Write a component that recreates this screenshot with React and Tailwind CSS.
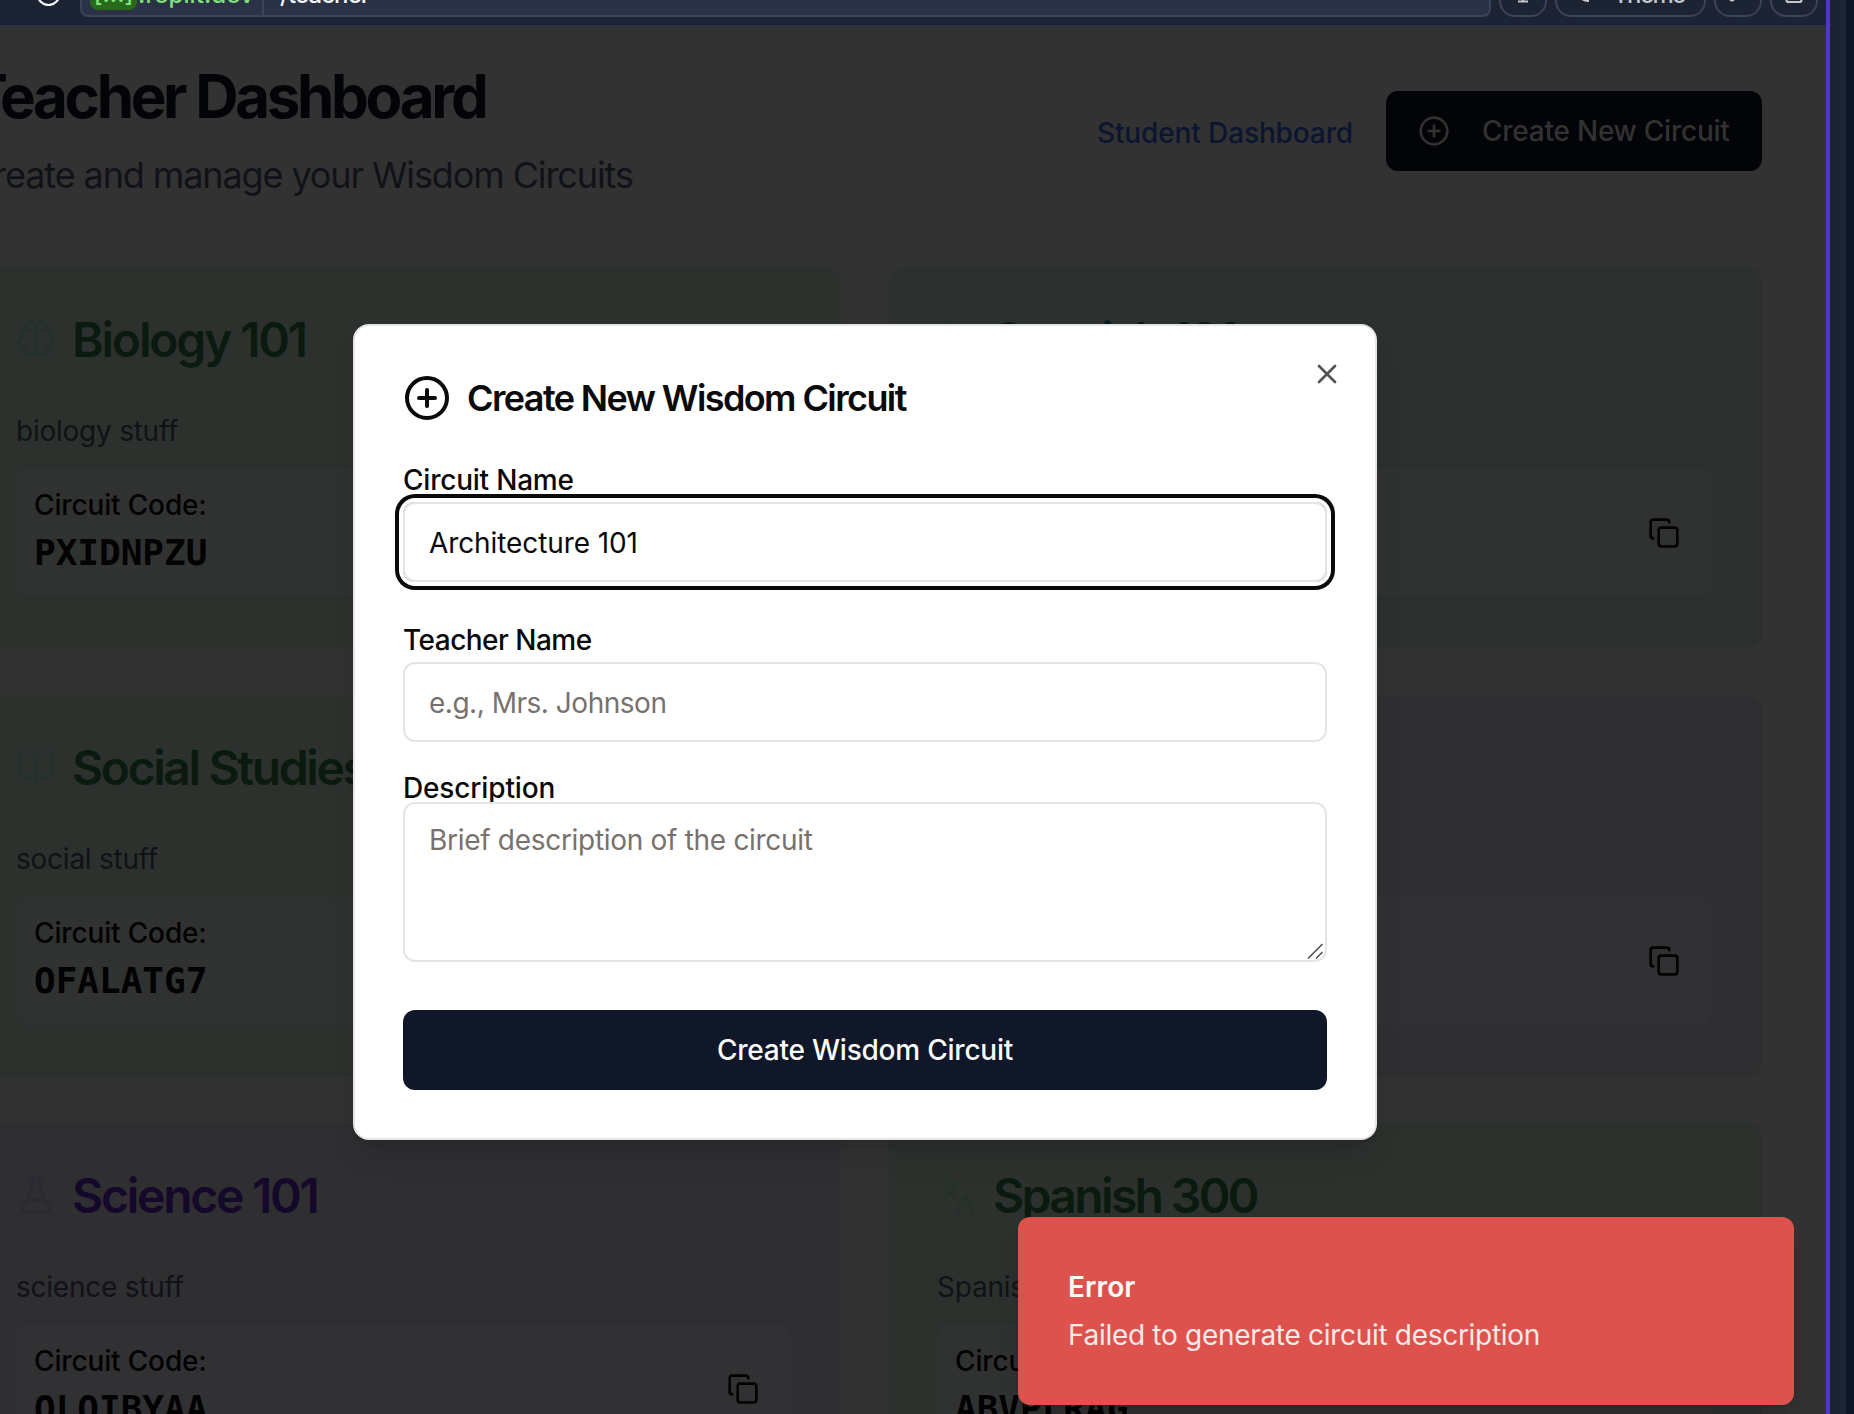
import React from "react";
import { Brain, BookOpen, FlaskConical, Languages, Copy, CirclePlus, X, Calculator } from "lucide-react";

const circuits = [
  { title: "Biology 101", text: "biology stuff", code: "PXIDNPZU", Icon: Brain, card: "bg-[#2d312e]", box: "bg-[#303231]", head: "text-[#0a1a0f] tracking-[-2.18px]", icon: "text-[#25302d]" },
  { title: "Spanish 101", text: "spanish stuff", code: "KWTRMEQA", Icon: Languages, card: "bg-[#2c3130]", box: "bg-[#303232]", head: "text-[#08191a] tracking-[-2.6px]", icon: "text-[#24302e]" },
  { title: "Social Studies", text: "social stuff", code: "OFALATG7", Icon: BookOpen, card: "bg-[#2d312e]", box: "bg-[#303231]", head: "text-[#0a1a0f] tracking-[-2.4px]", icon: "text-[#26312d]" },
  { title: "Math 101", text: "math stuff", code: "HZNQVUCD", Icon: Calculator, card: "bg-[#2f2e31]", box: "bg-[#313133]", head: "text-[#14082b] tracking-[-2.2px]", icon: "text-[#2c2a34]" },
  { title: "Science 101", text: "science stuff", code: "OLOIBYAA", Icon: FlaskConical, card: "bg-[#2f2e31]", box: "bg-[#313133]", head: "text-[#14082b] tracking-[-2.25px]", icon: "text-[#2b2a33]" },
  { title: "Spanish 300", text: "Spanish stuff", code: "ABVPLRAG", Icon: Languages, card: "bg-[#2d312e]", box: "bg-[#303231]", head: "text-[#0a1a0f] tracking-[-2.65px]", icon: "text-[#26302a]" },
];

function CircuitCard({ title, text, code, Icon, card, box, head, icon }) {
  return (
    <article className={`h-[382px] rounded-2xl pt-12 pr-[50px] pl-12 ${card}`}>
      <div className="flex h-12 items-center gap-4">
        <Icon className={`size-10 ${icon}`} />
        <h2 className={`pt-[2px] text-[48px] leading-[48px] font-semibold whitespace-nowrap ${head}`}>{title}</h2>
      </div>
      <p className="mt-12 text-[28px] leading-10 tracking-[-0.24px] text-[#101217]">{text}</p>
      <div className={`mt-[18px] flex h-32 items-center justify-between rounded-xl pr-4 pl-[18px] ${box}`}>
        <div>
          <p className="text-[28px] leading-10 font-medium tracking-[-0.15px] text-[#020202]">Circuit Code:</p>
          <p className="font-['DejaVu_Sans_Mono',monospace] text-[36px] leading-[56px] font-bold text-[#020202]">{code}</p>
        </div>
        <Copy className="mr-4 size-8 text-[#020202]" />
      </div>
    </article>
  );
}

function BarButton({ className, children }) {
  return (
    <div className={`h-[48px] shrink-0 rounded-2xl border-2 border-[#3c4259] text-[#c2c8cc] ${className}`}>{children}</div>
  );
}

function TopBar() {
  return (
    <div className="h-[27px] shrink-0 overflow-hidden border-b-2 border-[#2b3245] bg-[#1c2333]">
      <div className="-mt-[31px] flex h-[48px] items-center pr-2">
        <svg className="mr-[19px] ml-9 size-[25px] shrink-0" viewBox="0 0 25 25" fill="none" stroke="#f5f9fc" strokeWidth="2.2">
          <circle cx="12.5" cy="13" r="11" />
        </svg>
        <div className="flex h-[48px] w-[1411px] items-center rounded-lg border-2 border-[#3c4259] bg-[#2b3245] text-[24px] leading-8 font-medium">
          <span className="ml-2 flex h-[34px] w-[47px] shrink-0 items-end justify-center rounded-lg bg-[#276a1c] text-[#7fe07c]">[...]</span>
          <span className="w-[125px] pt-[4px] pl-px tracking-[0.1px] whitespace-nowrap text-[#7fe07c]">.replit.dev</span>
          <span className="h-full w-0.5 bg-[#3c4259]" />
          <span className="ml-4 pt-[3px] tracking-[-0.9px] text-[#f5f9fc]">/teacher</span>
          <span className="grow" />
          <svg className="mr-5 size-4" viewBox="0 0 16 16" fill="none" stroke="#7d8497" strokeWidth="2">
            <path d="M3 6l5 5 5-5" />
          </svg>
        </div>
        <BarButton className="ml-2 flex w-12 items-center justify-center">
          <svg className="size-5" viewBox="0 0 20 20" fill="none" stroke="currentColor" strokeWidth="2">
            <path d="M10 3v15M5 18.500h10" />
          </svg>
        </BarButton>
        <BarButton className="ml-2 flex w-[151px] items-center pl-[18px]">
          <svg className="size-6 shrink-0" viewBox="0 0 24 24" fill="none" stroke="currentColor" strokeWidth="2">
            <path d="M3 14c3 4 6 6 10 6v-5c0-3 8 1 8-5a9 8 0 0 0-18 4z" />
          </svg>
          <span className="ml-[14px] pt-[3px] text-[24px] leading-8 font-medium tracking-[-1.6px]">Theme</span>
        </BarButton>
        <BarButton className="ml-2 flex w-12 items-center justify-center">
          <svg className="size-6" viewBox="0 0 24 24" fill="none" stroke="currentColor" strokeWidth="2.200" strokeLinecap="round">
            <path d="M5 15l-1 3c1 2 3 2 4 0l8-10" />
          </svg>
        </BarButton>
        <BarButton className="ml-2 flex w-12 items-center justify-center">
          <svg className="size-6" viewBox="0 0 24 24" fill="none" stroke="currentColor" strokeWidth="2.200">
            <rect x="4.500" y="5" width="15" height="16" rx="2" />
          </svg>
        </BarButton>
      </div>
    </div>
  );
}

function Label({ className, children }) {
  return <label className={`block text-[28px] leading-7 font-medium ${className}`}>{children}</label>;
}

function Dialog() {
  return (
    <div className="absolute top-[324px] left-[353px] h-[816px] w-[1024px] rounded-2xl border-2 border-[#e5e5e5] bg-white p-12 text-[#0a0a0a] shadow-[0_20px_30px_-6px_rgba(0,0,0,0.12),0_8px_12px_-8px_rgba(0,0,0,0.12)]">
      <X className="absolute top-8 right-8 size-8 text-[#545454]" />
      <div className="flex h-12 items-center gap-4">
        <CirclePlus className="size-12" />
        <h2 className="text-[36px] leading-9 font-semibold tracking-[-1.6px]">Create New Wisdom Circuit</h2>
      </div>
      <Label className="mt-11 tracking-[-0.22px]">Circuit Name</Label>
      <input
        readOnly
        value="Architecture 101"
        className="mt-2 block h-20 w-full rounded-xl border-2 border-[#e5e5e5] px-6 pt-[2px] text-[28px] tracking-[-0.1px] shadow-[0_0_0_4px_#fff,0_0_0_8px_#0a0a0a] outline-none"
      />
      <Label className="mt-11 tracking-[-0.52px]">Teacher Name</Label>
      <input
        readOnly
        placeholder="e.g., Mrs. Johnson"
        className="mt-2 block h-20 w-full rounded-xl border-2 border-[#e5e5e5] px-6 pt-[2px] text-[28px] tracking-[-0.48px] placeholder:text-[#78716c]"
      />
      <Label className="mt-8 tracking-[-0.15px]">Description</Label>
      <div className="relative">
        <textarea
          readOnly
          placeholder="Brief description of the circuit"
          className="block h-40 w-full resize-none rounded-xl border-2 border-[#e5e5e5] px-6 py-4 text-[28px] leading-10 tracking-[-0.3px] placeholder:text-[#78716c]"
        />
        <svg className="absolute right-1 bottom-[3px] size-4" viewBox="0 0 16 16" fill="none" stroke="#4a4a4a" strokeWidth="1.500">
          <path d="M1 15.500L15.500 1M9 15.500L15.500 9" />
        </svg>
      </div>
      <button className="mt-12 block h-20 w-full rounded-xl bg-[#101729] text-[28px] font-medium tracking-[-0.22px] text-[#fafaf9]">
        Create Wisdom Circuit
      </button>
    </div>
  );
}

function Toast() {
  return (
    <div className="absolute top-[1217px] left-[1018px] h-[188px] w-[776px] rounded-xl bg-[#dd524c] px-[50px] pt-[50px] text-[28px] leading-10 text-[#fafaf9] shadow-[0_20px_30px_-6px_rgba(0,0,0,0.12),0_8px_12px_-8px_rgba(0,0,0,0.12)]">
      <p className="font-semibold tracking-[0.1px]">Error</p>
      <p className="mt-2 tracking-[-0.3px] opacity-90">Failed to generate circuit description</p>
    </div>
  );
}

export default function App() {
  return (
    <div className="relative flex h-[1414px] w-[1854px] overflow-hidden bg-[#0e1525] font-[Inter,sans-serif]">
      <div className="flex w-[1826px] shrink-0 flex-col overflow-hidden">
        <TopBar />
        <main className="grow bg-[#323232] pt-[38px] pr-16">
          <div className="-ml-8">
            <header className="flex items-start justify-between">
              <div>
                <h1 className="h-[60px] pt-px text-[60px] leading-[60px] font-bold tracking-[-3.3px] whitespace-nowrap text-[#030408]">Teacher Dashboard</h1>
                <p className="mt-[22px] text-[36px] leading-[56px] tracking-[-1.11px] whitespace-nowrap text-[#101217]">Create and manage your Wisdom Circuits</p>
              </div>
              <div className="mt-[26px] flex gap-[33px]">
                <a className="text-[28px] leading-[85px] font-medium tracking-[-0.12px] text-[#0b1530]">Student Dashboard</a>
                <button className="flex h-20 w-[376px] items-center gap-8 rounded-xl bg-[#030408] px-8 text-[28px] font-medium tracking-[-0.24px] whitespace-nowrap text-[#323231]">
                  <CirclePlus className="size-8 shrink-0" />
                  Create New Circuit
                </button>
              </div>
            </header>
            <section className="mt-16 grid w-[1794px] grid-cols-2 gap-x-12 gap-y-[46px]">
              {circuits.map((c) => (
                <CircuitCard key={c.title} {...c} />
              ))}
            </section>
          </div>
        </main>
      </div>
      <div className="w-1 shrink-0 bg-[#5138cc]" />
      <div className="w-4 shrink-0 bg-[#1c2333]" />
      <Dialog />
      <Toast />
    </div>
  );
}
